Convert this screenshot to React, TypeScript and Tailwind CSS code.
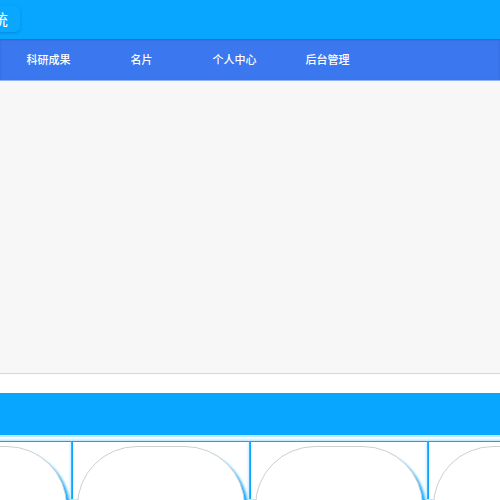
import React from 'react'

const navItems = ['科研成果', '名片', '个人中心', '后台管理']

function Card() {
  return (
    <div className="flex h-[58px] w-[178px] shrink-0 justify-center border-x border-t border-[#09a6fd] bg-white px-[4px] pt-[4px] shadow-[0_0_4px_#6cc8ff]">
      <div className="h-[80px] w-full rounded-t-[60px] border border-[#cfcfcf] bg-white shadow-[3px_4px_3px_#09a6fd]" />
    </div>
  )
}

export default function App() {
  return (
    <div className="h-[500px] w-[500px] overflow-hidden bg-white font-['Noto_Sans_CJK_SC',sans-serif]">
      <header className="flex h-[39px] items-start bg-[#08a6fe] pt-[6px]">
        <div className="ml-[-92px] flex h-[26px] items-center rounded-[5px] bg-[#0aa7fe] pl-[4px] pr-[12px] text-[16px] text-white shadow-[0_1px_3px_rgba(0,80,160,0.35)]">
          科研管理系统
        </div>
      </header>
      <nav className="flex h-[42px] items-center border-b border-[#8fb2f6] bg-[#3b77ef] pl-[2px] shadow-[inset_0_1px_2px_rgba(0,40,120,0.25)]">
        {navItems.map((item) => (
          <div key={item} className="w-[93px] shrink-0 text-center text-[11px] font-medium text-white">
            {item}
          </div>
        ))}
      </nav>
      <main className="h-[293px] border-b border-[#d6d6d6] bg-[#f7f7f7]" />
      <div className="h-[19px] bg-white" />
      <div className="h-[42px] bg-[#08a6fe]" />
      <div className="h-[2px] bg-[#bfe6ff]" />
      <div className="mt-[4px] ml-[-106px] flex">
        <Card />
        <Card />
        <Card />
        <Card />
      </div>
    </div>
  )
}
